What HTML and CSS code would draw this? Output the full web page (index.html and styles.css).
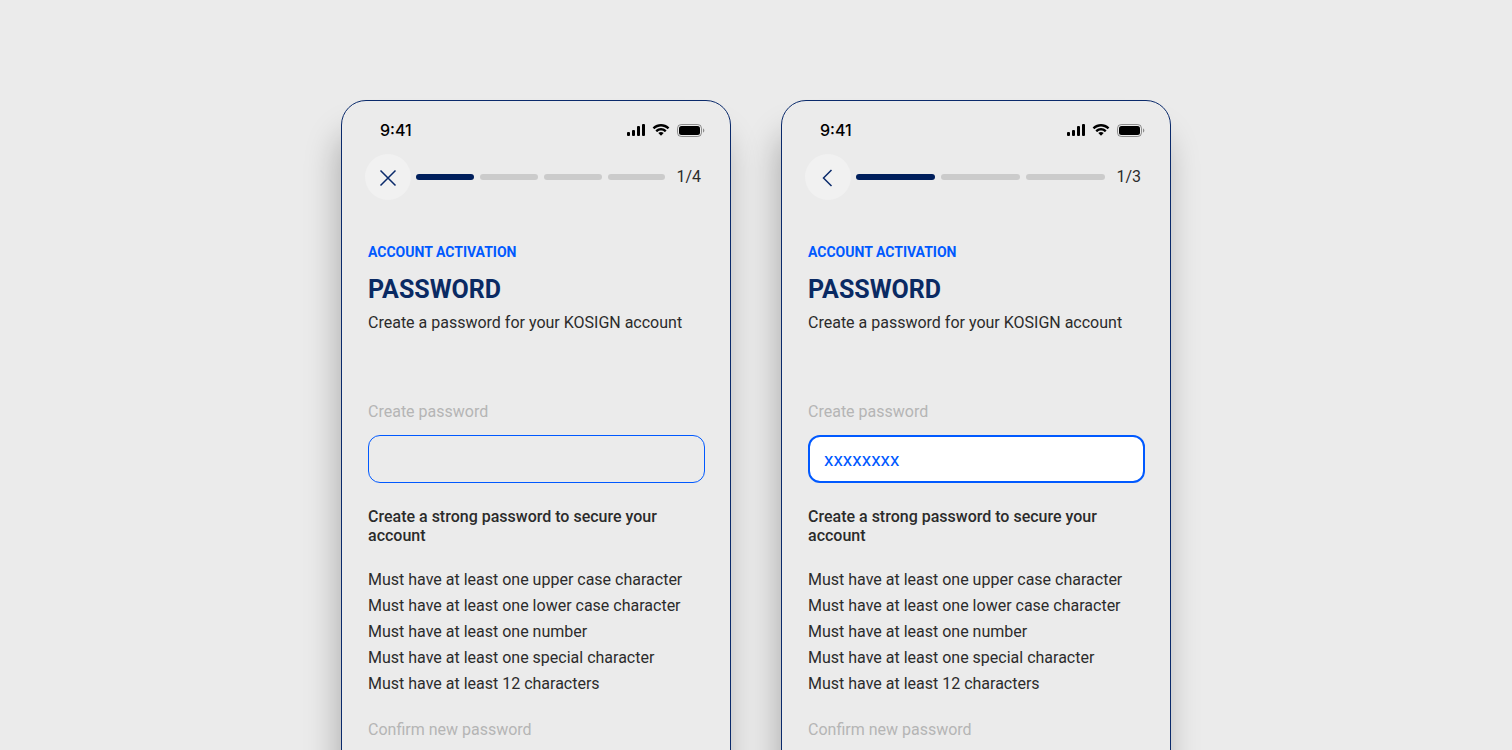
FILE: index.html
```html
<!DOCTYPE html>
<html lang="en">
<head>
<meta charset="utf-8">
<meta name="viewport" content="width=device-width, initial-scale=1">
<title>Account activation</title>
<link rel="stylesheet" href="styles.css">
</head>
<body>
<svg class="sprite" aria-hidden="true">
  <symbol id="signal" viewBox="0 0 18 12"><rect y="8" width="3" height="4" rx="1"/><rect x="5" y="6" width="3" height="6" rx="1"/><rect x="10" y="2" width="3" height="10" rx="1"/><rect x="15" width="3" height="12" rx="1"/></symbol>
  <symbol id="wifi" viewBox="0 0 17 12"><path d="M8.500 2.500c2.400 0 4.700.9 6.400 2.600.1.1.3.1.5 0l1.200-1.300c.2-.1.2-.4 0-.5-4.500-4.400-11.700-4.400-16.200 0-.2.1-.2.4 0 .5l1.200 1.300c.2.1.4.1.5 0C3.800 3.400 6.100 2.500 8.500 2.500zM8.500 6.600c1.300 0 2.600.5 3.600 1.400.1.1.3.1.5 0l1.200-1.300c.2-.1.2-.4 0-.5-3-2.800-7.600-2.800-10.600 0-.2.1-.2.4 0 .5l1.200 1.300c.2.1.4.1.5 0 1-.9 2.300-1.400 3.600-1.400zM10.900 9.300c.2-.1.2-.4 0-.5-1.400-1.200-3.400-1.200-4.800 0-.2.1-.2.4 0 .5l2.100 2.100c.2.2.4.2.6 0z"/></symbol>
  <symbol id="battery" viewBox="0 0 28 13"><rect x=".5" y=".5" width="24" height="12" rx="3.800" fill="none" stroke="#000" stroke-opacity=".4"/><path d="M26 4.500v4c.8-.3 1.300-1.100 1.300-2s-.5-1.700-1.300-2z" opacity=".4"/><rect x="2" y="2" width="21" height="9" rx="2.500"/></symbol>
</svg>
<main class="stage">
  <section class="phone">
    <div class="status">
      <span class="time">9:41</span>
      <div class="indicators">
        <svg class="signal"><use href="#signal"/></svg>
        <svg class="wifi"><use href="#wifi"/></svg>
        <svg class="battery"><use href="#battery"/></svg>
      </div>
    </div>
    <nav class="steps">
      <button class="round" type="button" aria-label="Close"><svg class="glyph" viewBox="0 0 24 24"><path d="M4.500 5.500l15 15M19.500 5.500l-15 15"/></svg></button>
      <div class="bars"><span class="bar done"></span><span class="bar"></span><span class="bar"></span><span class="bar"></span></div>
      <span class="count">1/4</span>
    </nav>
    <form class="content">
      <p class="eyebrow">ACCOUNT ACTIVATION</p>
      <h1 class="title">PASSWORD</h1>
      <p class="lead">Create a password for your KOSIGN account</p>
      <label class="label" for="create-a">Create password</label>
      <input class="field" id="create-a" type="text">
      <h2 class="hint">Create a strong password to secure your account</h2>
      <ul class="rules">
        <li>Must have at least one upper case character</li>
        <li>Must have at least one lower case character</li>
        <li>Must have at least one number</li>
        <li>Must have at least one special character</li>
        <li>Must have at least 12 characters</li>
      </ul>
      <label class="label confirm" for="confirm-a">Confirm new password</label>
      <input class="field" id="confirm-a" type="text">
    </form>
  </section>
  <section class="phone">
    <div class="status">
      <span class="time">9:41</span>
      <div class="indicators">
        <svg class="signal"><use href="#signal"/></svg>
        <svg class="wifi"><use href="#wifi"/></svg>
        <svg class="battery"><use href="#battery"/></svg>
      </div>
    </div>
    <nav class="steps">
      <button class="round" type="button" aria-label="Back"><svg class="glyph" viewBox="0 0 24 24"><path d="M15.500 5L7.500 13l8 8"/></svg></button>
      <div class="bars"><span class="bar done"></span><span class="bar"></span><span class="bar"></span></div>
      <span class="count">1/3</span>
    </nav>
    <form class="content">
      <p class="eyebrow">ACCOUNT ACTIVATION</p>
      <h1 class="title">PASSWORD</h1>
      <p class="lead">Create a password for your KOSIGN account</p>
      <label class="label" for="create-b">Create password</label>
      <input class="field active" id="create-b" type="text" value="xxxxxxxx">
      <h2 class="hint">Create a strong password to secure your account</h2>
      <ul class="rules">
        <li>Must have at least one upper case character</li>
        <li>Must have at least one lower case character</li>
        <li>Must have at least one number</li>
        <li>Must have at least one special character</li>
        <li>Must have at least 12 characters</li>
      </ul>
      <label class="label confirm" for="confirm-b">Confirm new password</label>
      <input class="field" id="confirm-b" type="text">
    </form>
  </section>
</main>
</body>
</html>
```
FILE: styles.css
```css
* { box-sizing: border-box; }
body {
  margin: 0;
  background: #ebebeb;
  color: #2b2b2b;
  font: 16px/20px Roboto, "Liberation Sans", sans-serif;
}
.sprite { position: absolute; width: 0; height: 0; }
.stage {
  display: flex;
  justify-content: center;
  align-items: flex-start;
  gap: 50px;
  height: 100vh;
  padding-top: 100px;
  overflow: hidden;
}
.phone {
  flex: 0 1 390px;
  padding: 19px 25px 60px 26px;
  border: 1px solid #0a2a6b;
  border-radius: 25px;
  background: #ebebeb;
  box-shadow: -4px 32px 32px rgba(0, 0, 0, .25);
}
.status {
  display: flex;
  justify-content: space-between;
  align-items: center;
  padding-left: 12px;
}
.time { color: #000; font: 500 16px/20px Inter, sans-serif; }
.indicators { display: flex; align-items: center; gap: 7px; }
.signal { width: 18px; height: 12px; }
.wifi { width: 18px; height: 12px; }
.battery { width: 28px; height: 13px; }
.steps {
  display: flex;
  align-items: center;
  margin: 14px 4px 0 -3px;
}
.round {
  display: flex;
  align-items: center;
  justify-content: center;
  width: 46px;
  height: 46px;
  padding: 0;
  border: 0;
  border-radius: 50%;
  background: #f1f1f1;
}
.glyph {
  width: 24px;
  height: 24px;
  fill: none;
  stroke: #0a2a6b;
  stroke-width: 1.5;
}
.bars { display: flex; flex: 1; gap: 6px; margin: 0 11px 0 5px; }
.bar { flex: 1; height: 6px; border-radius: 3px; background: #cbcbcb; }
.done { background: #001f5c; }
.content { display: flex; flex-direction: column; }
.eyebrow {
  margin: 42px 0 0;
  color: #0059ff;
  font-size: 14px;
  font-weight: 700;
}
.title {
  margin: 12px 0 0;
  color: #0a2a63;
  font-size: 25px;
  line-height: 32px;
}
.lead { margin: 7px 0 0; }
.label { margin-top: 69px; color: #b5b5b5; }
.field {
  width: 100%;
  height: 48px;
  margin-top: 13px;
  padding: 0 15px;
  border: 1px solid #0059ff;
  border-radius: 12px;
  background: transparent;
  color: #0059ff;
  font: inherit;
  font-size: 19px;
}
.active { padding: 0 14px; border-width: 2px; background: #fff; }
.hint { margin: 24px 0 0; font-size: 16px; line-height: 19px; font-weight: 500; }
.rules { margin: 22px 0 0; padding: 0; list-style: none; line-height: 26px; }
.confirm { margin-top: 23px; }
```
